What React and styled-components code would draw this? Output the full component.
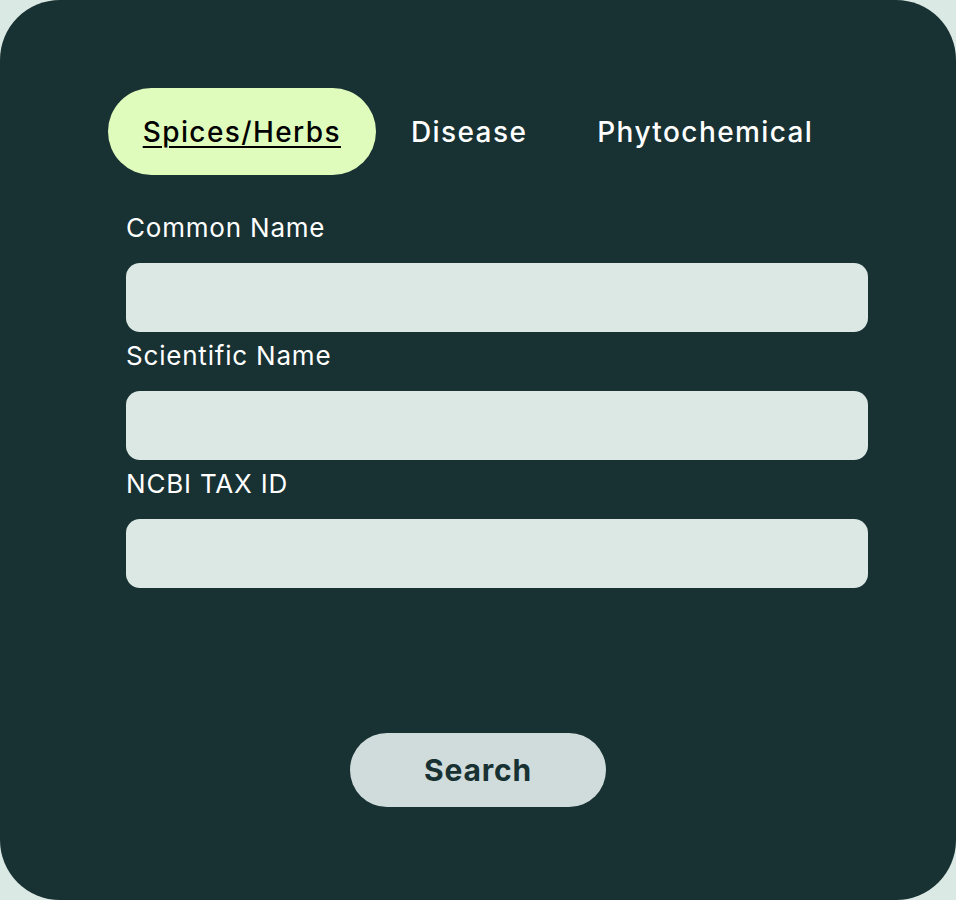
import React, { useState } from "react";
import styled, { createGlobalStyle } from "styled-components";

const GlobalStyle = createGlobalStyle`
  body {
    margin: 0;
    background: #dbe9e4;
    font-family: Inter, "Noto Sans", sans-serif;
  }
`;

const Card = styled.div`
  width: 956px;
  height: 900px;
  box-sizing: border-box;
  background: #183133;
  border-radius: 60px;
  padding-top: 88px;
  display: flex;
  flex-direction: column;
`;

const Tabs = styled.div`
  display: flex;
  justify-content: center;
`;

const Tab = styled.button`
  height: 87px;
  padding: 0 35px;
  border: none;
  border-radius: 44px;
  background: ${(p) => (p.$active ? "#e0fcbc" : "transparent")};
  color: ${(p) => (p.$active ? "#000" : "#fff")};
  text-decoration: ${(p) => (p.$active ? "underline" : "none")};
  text-underline-offset: 4px;
  text-decoration-thickness: 2px;
  font-family: inherit;
  font-size: 28px;
  letter-spacing: 1.4px;
  font-weight: 500;
  cursor: pointer;
`;

const Form = styled.div`
  display: flex;
  flex-direction: column;
  padding: 38px 88px 0 126px;
`;

const Label = styled.label`
  color: #fff;
  font-size: 26px;
  letter-spacing: 0.8px;
  line-height: 29px;
  margin-bottom: 21px;
`;

const Input = styled.input`
  height: 69px;
  border: none;
  border-radius: 14px;
  background: #dbe8e3;
  box-sizing: border-box;
  margin-bottom: 9px;
  padding: 0 20px;
  font-family: inherit;
  font-size: 22px;
  outline: none;
`;

const Footer = styled.div`
  display: flex;
  justify-content: center;
  margin-top: 136px;
`;

const SearchButton = styled.button`
  width: 256px;
  height: 74px;
  border: none;
  border-radius: 37px;
  background: #cfdcdb;
  color: #183133;
  font-family: inherit;
  font-size: 30px;
  letter-spacing: 0.8px;
  font-weight: 700;
  cursor: pointer;
`;

const tabs = ["Spices/Herbs", "Disease", "Phytochemical"];
const fields = ["Common Name", "Scientific Name", "NCBI TAX ID"];

export default function App() {
  const [active, setActive] = useState(0);
  return (
    <>
      <GlobalStyle />
      <Card>
        <Tabs>
          {tabs.map((t, i) => (
            <Tab key={t} $active={i === active} onClick={() => setActive(i)}>
              {t}
            </Tab>
          ))}
        </Tabs>
        <Form>
          {fields.map((f) => (
            <React.Fragment key={f}>
              <Label>{f}</Label>
              <Input />
            </React.Fragment>
          ))}
        </Form>
        <Footer>
          <SearchButton>Search</SearchButton>
        </Footer>
      </Card>
    </>
  );
}
